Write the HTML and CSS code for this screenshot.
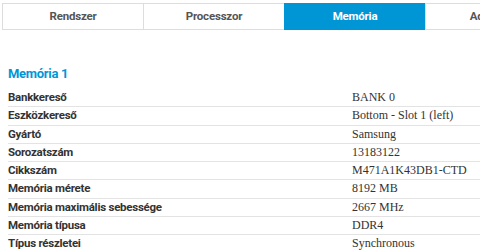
FILE: index.html
```html
<!DOCTYPE html>
<html lang="hu">
<head>
    <meta charset="UTF-8">
    <title>Memória</title>
    <link rel="stylesheet" href="styles.css">
</head>
<body>
    <div class="tabs">
        <div class="tab">Rendszer</div>
        <div class="tab">Processzor</div>
        <div class="tab active">Memória</div>
        <div class="tab">Adattároló</div>
    </div>

    <div class="section">
        <h3>Memória 1</h3>
        <div class="row"><div class="label">Bankkereső</div><div class="value">BANK 0</div></div>
        <div class="row"><div class="label">Eszközkereső</div><div class="value">Bottom - Slot 1 (left)</div></div>
        <div class="row"><div class="label">Gyártó</div><div class="value">Samsung</div></div>
        <div class="row"><div class="label">Sorozatszám</div><div class="value">13183122</div></div>
        <div class="row"><div class="label">Cikkszám</div><div class="value">M471A1K43DB1-CTD</div></div>
        <div class="row"><div class="label">Memória mérete</div><div class="value">8192 MB</div></div>
        <div class="row"><div class="label">Memória maximális sebessége</div><div class="value">2667 MHz</div></div>
        <div class="row"><div class="label">Memória típusa</div><div class="value">DDR4</div></div>
        <div class="row"><div class="label">Típus részletei</div><div class="value">Synchronous</div></div>
    </div>
</body>
</html>
```

FILE: styles.css
```css
body {
    margin: 0;
    background: white;
    overflow: hidden;
    font-family: Roboto, "Liberation Sans", sans-serif;
    color: #333;
}
.tabs {
    display: flex;
    margin: 3px 0 0 2px;
}
.tab {
    flex: 0 0 140px;
    height: 25px;
    line-height: 25px;
    text-align: center;
    font-size: 11.5px;
    letter-spacing: -0.2px;
    font-weight: bold;
    color: #555;
    border: 1px solid #ddd;
    margin-right: -1px;
}
.tab.active {
    background: #0096d6;
    border-color: #0096d6;
    color: white;
}
.section {
    padding: 0 0 0 8px;
    margin-top: 35px;
}
.section h3 {
    margin: 0 0 6px;
    font-size: 13px;
    letter-spacing: -0.3px;
    line-height: 18px;
    color: #0096d6;
}
.row {
    display: grid;
    grid-template-columns: 344px 1fr;
    height: 17.25px;
    line-height: 17px;
    border-bottom: 1px solid #e3e3e3;
}
.label {
    font-size: 11.5px;
    letter-spacing: -0.25px;
    font-weight: bold;
    color: #333;
}
.value {
    font-family: "Liberation Serif", serif;
    font-size: 12px;
    color: #333;
}
```
